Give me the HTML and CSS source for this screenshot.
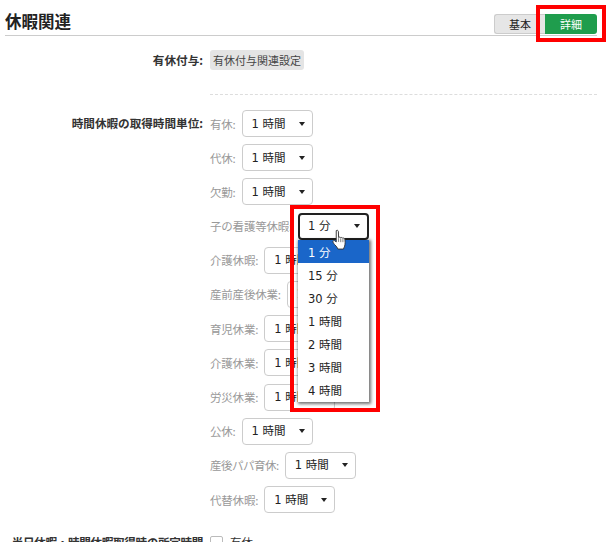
FILE: index.html
```html
<!DOCTYPE html>
<html lang="ja">
<head>
<meta charset="utf-8">
<title>休暇関連</title>
<link rel="stylesheet" href="styles.css">
</head>
<body>
<div class="page">
  <header class="head">
    <h1 class="title">休暇関連</h1>
    <div class="tabs">
      <span class="tab tab-basic">基本</span>
      <span class="tab tab-detail">詳細</span>
    </div>
  </header>

  <section class="form-row grant">
    <div class="row-label">有休付与:</div>
    <div class="row-value"><span class="chip">有休付与関連設定</span></div>
  </section>

  <div class="divider"></div>

  <section class="form-row units">
    <div class="row-label">時間休暇の取得時間単位:</div>
    <div class="row-value stack">
      <div class="sub"><span class="sub-label">有休:</span><div class="sel"><span>1 時間</span><i class="caret"></i></div></div>
      <div class="sub"><span class="sub-label">代休:</span><div class="sel"><span>1 時間</span><i class="caret"></i></div></div>
      <div class="sub"><span class="sub-label">欠勤:</span><div class="sel"><span>1 時間</span><i class="caret"></i></div></div>
      <div class="sub"><span class="sub-label">子の看護等休暇:</span><div class="sel sel-open"><span>1 分</span><i class="caret"></i></div></div>
      <div class="sub"><span class="sub-label">介護休暇:</span><div class="sel"><span>1 時間</span><i class="caret"></i></div></div>
      <div class="sub"><span class="sub-label">産前産後休業:</span><div class="sel"><span>1 時間</span><i class="caret"></i></div></div>
      <div class="sub"><span class="sub-label">育児休業:</span><div class="sel"><span>1 時間</span><i class="caret"></i></div></div>
      <div class="sub"><span class="sub-label">介護休業:</span><div class="sel"><span>1 時間</span><i class="caret"></i></div></div>
      <div class="sub"><span class="sub-label">労災休業:</span><div class="sel"><span>1 時間</span><i class="caret"></i></div></div>
      <div class="sub"><span class="sub-label">公休:</span><div class="sel"><span>1 時間</span><i class="caret"></i></div></div>
      <div class="sub"><span class="sub-label sub-label-tight">産後パパ育休:</span><div class="sel"><span>1 時間</span><i class="caret"></i></div></div>
      <div class="sub"><span class="sub-label">代替休暇:</span><div class="sel"><span>1 時間</span><i class="caret"></i></div></div>
    </div>
  </section>

  <section class="form-row half">
    <div class="row-label">半日休暇・時間休暇取得時の所定時間</div>
    <div class="row-value check-line"><span class="check"></span><span class="check-text">有休</span></div>
  </section>
</div>

<ul class="menu">
  <li class="opt opt-active">1 分</li>
  <li class="opt">15 分</li>
  <li class="opt">30 分</li>
  <li class="opt">1 時間</li>
  <li class="opt">2 時間</li>
  <li class="opt">3 時間</li>
  <li class="opt">4 時間</li>
</ul>

<div class="mark mark-tab"></div>
<div class="mark mark-menu"></div>

<svg class="cursor" width="16" height="25" viewBox="0 0 17 24" aria-hidden="true">
  <path d="M4.500 1.500c1-.8 2.200-.2 2.300 1l.2 6.300c.7-.6 1.900-.5 2.200.3.700-.5 1.900-.3 2.200.5.800-.4 2-.1 2.200 1 .5 2.400.5 5-.2 7.400-.3 1.100-.7 2-1.200 3.100H6.300c-.6-1.600-1.700-3-3-4.300C2.300 16 1.200 14.500 1 13.400c-.2-1 1-1.700 2-1.100l1.500 1.200z" fill="#fff" stroke="#333" stroke-width="1" stroke-linejoin="round"/>
  <path d="M7 9.500v4M9.300 9.800v4M11.600 10.400v3.400" fill="none" stroke="#555" stroke-width=".8"/>
</svg>
</body>
</html>
```
FILE: styles.css
```css
* { box-sizing: border-box; }
html, body { margin: 0; padding: 0; height: 542px; overflow: hidden; background: #fff; }
body {
  position: relative;
  font-family: "Noto Sans CJK JP", "Open Sans", sans-serif;
  font-size: 12px;
  line-height: 16px;
  color: #333;
}
.page { width: 592px; margin-left: 5px; }
.head {
  height: 36px;
  padding-top: 9px;
  border-bottom: 1px solid #ccc;
  display: flex;
  justify-content: space-between;
  align-items: flex-start;
}
.title { margin: 0; font-size: 16.5px; line-height: 24px; font-weight: 700; color: #222; }
.tabs { display: flex; margin-top: 5px; }
.tab {
  height: 20px;
  display: flex;
  align-items: center;
  justify-content: center;
  font-size: 11px;
}
.tab-basic {
  width: 51px;
  background: #e6e6e6;
  border: 1px solid #ccc;
  border-right: 0;
  border-radius: 3px 0 0 3px;
  color: #222;
}
.tab-detail {
  width: 52px;
  background: #1f9d4d;
  color: #fff;
  border-radius: 0 3px 3px 0;
}
.form-row { display: flex; }
.row-label {
  width: 205px;
  flex: none;
  padding-right: 7px;
  text-align: right;
  font-weight: 700;
  font-size: 11.6px;
  line-height: 26px;
  color: #333;
  white-space: nowrap;
}
.grant { margin-top: 14px; }
.grant .row-label { line-height: 20px; }
.chip {
  display: inline-block;
  height: 20px;
  line-height: 20px;
  padding: 0 3px;
  border-radius: 3px;
  background: #e4e4e4;
  font-size: 11px;
  color: #444;
  white-space: nowrap;
}
.divider {
  width: 387px;
  margin: 24px 0 0 205px;
  border-top: 1px dashed #ddd;
}
.units { margin-top: 15px; }
.stack { display: flex; flex-direction: column; gap: 7.2px; }
.sub { display: flex; align-items: center; height: 27px; gap: 6px; }
.sub-label { color: #999; font-size: 11.5px; letter-spacing: -.2px; white-space: nowrap; }
.sub-label-tight { letter-spacing: -.5px; }
.sel {
  width: 71px;
  height: 27px;
  flex: none;
  padding: 0 0 0 9px;
  border: 1px solid #ccc;
  border-radius: 4px;
  background: #fff;
  display: flex;
  align-items: center;
  justify-content: space-between;
  color: #222;
  font-family: "DejaVu Sans", "Noto Sans CJK JP", sans-serif;
  font-size: 11.5px;
  white-space: nowrap;
}
.sel-open { border: 2px solid #222; padding-left: 8px; }
.caret {
  width: 0;
  height: 0;
  margin-right: 7px;
  border-left: 3.5px solid transparent;
  border-right: 3.5px solid transparent;
  border-top: 4px solid #222;
}
.half { margin-top: 19px; }
.half .row-label { line-height: 20px; letter-spacing: -.35px; }
.check-line { display: flex; align-items: center; gap: 7px; height: 20px; }
.check { width: 13px; height: 13px; border: 1px solid #bbb; border-radius: 2px; }
.check-text { color: #333; font-size: 11.5px; }

.menu {
  position: absolute;
  left: 298px;
  top: 240px;
  width: 71px;
  height: 162px;
  margin: 0;
  padding: 0;
  list-style: none;
  background: #fff;
  box-shadow: 1px 1px 3px 1px rgba(0, 0, 0, .55);
}
.opt {
  height: 23px;
  padding: 4px 0 0 10px;
  line-height: 19px;
  color: #222;
  font-family: "DejaVu Sans", "Noto Sans CJK JP", sans-serif;
  font-size: 11.5px;
  white-space: nowrap;
}
.opt-active { background: #1a66c9; color: #fff; }
.mark { position: absolute; border: 4px solid #f00; }
.mark-tab { left: 536px; top: 5px; width: 70px; height: 37px; }
.mark-menu { left: 290px; top: 205px; width: 90px; height: 207px; }
.cursor { position: absolute; left: 332px; top: 228px; }
```
